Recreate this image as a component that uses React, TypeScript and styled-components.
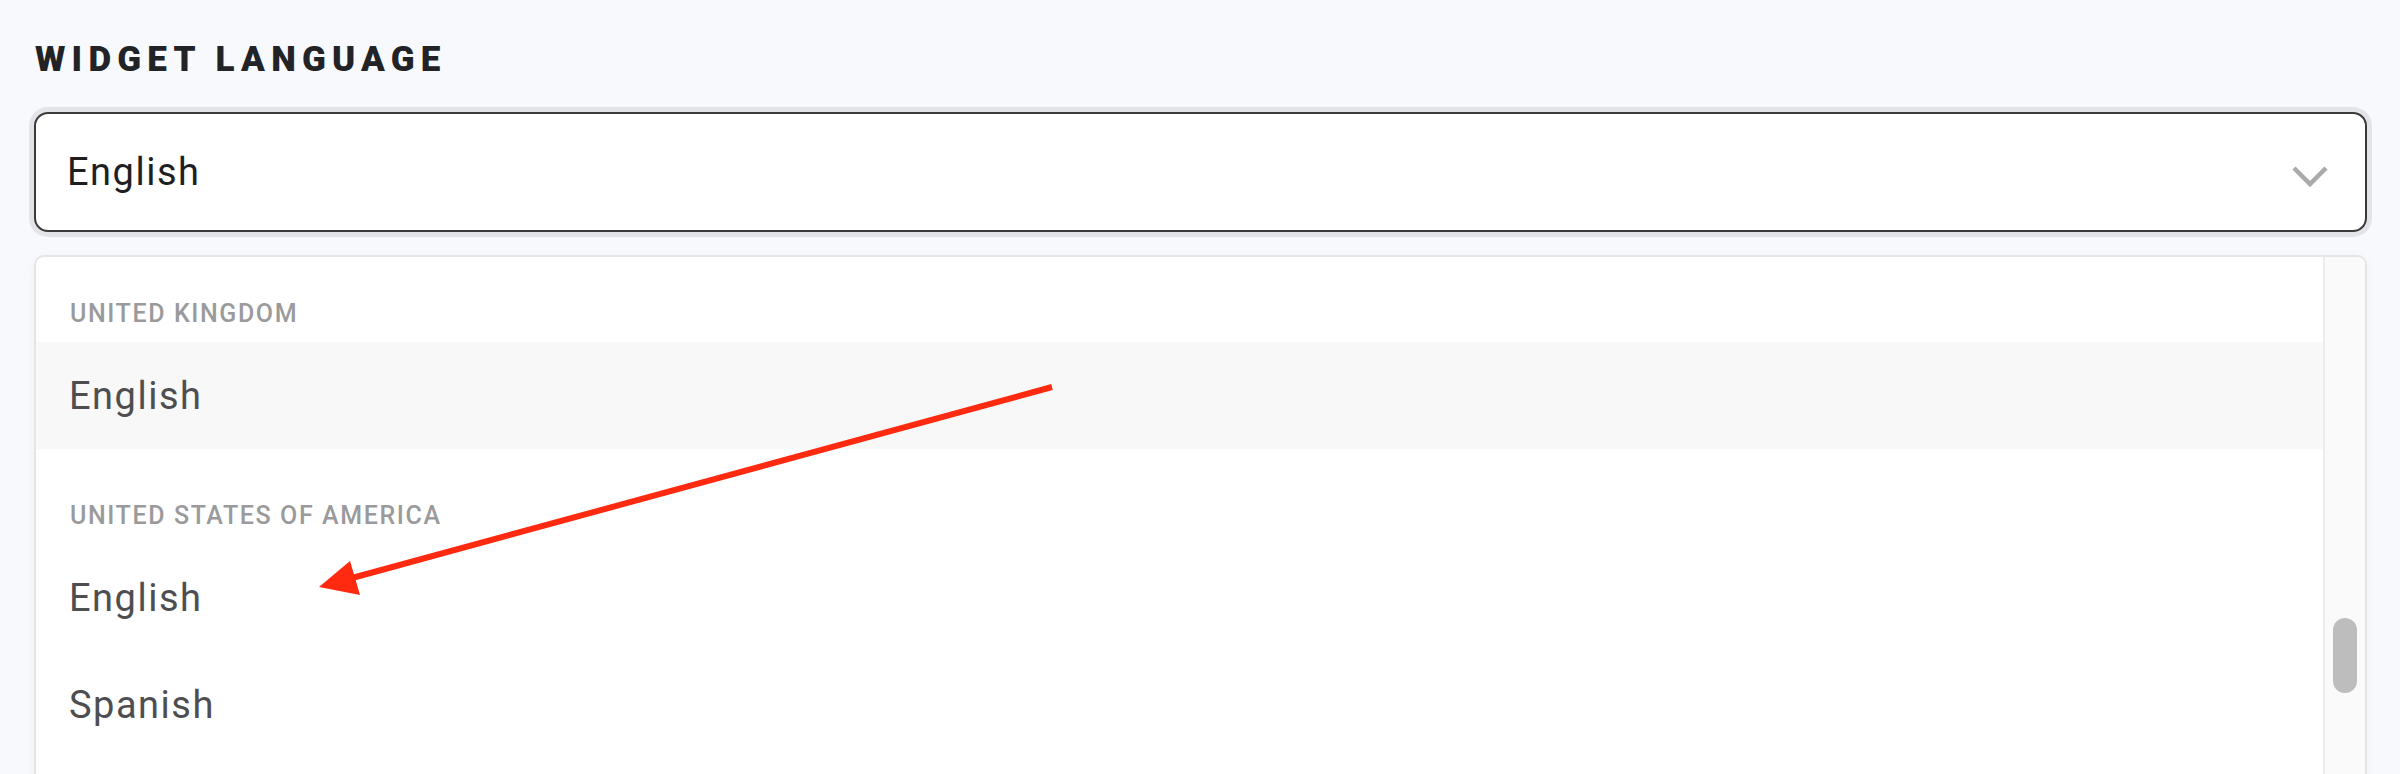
import React from "react";
import styled, { createGlobalStyle } from "styled-components";

const Global = createGlobalStyle`
  html, body { margin: 0; padding: 0; }
  body {
    background: #f8f9fc;
    font-family: Roboto, "Liberation Sans", Arial, sans-serif;
    overflow: hidden;
    width: 2400px;
    height: 774px;
  }
`;

const Page = styled.div`
  position: relative;
  width: 2400px;
  height: 774px;
  padding: 40px 33px 0 34px;
  box-sizing: border-box;
  display: flex;
  flex-direction: column;
  overflow: hidden;
`;

const Label = styled.div`
  flex-shrink: 0;
  font-weight: 900;
  font-size: 35px;
  line-height: 40px;
  letter-spacing: 6.2px;
  color: #222326;
  padding-left: 1px;
  text-transform: uppercase;
`;

const Select = styled.div`
  flex-shrink: 0;
  margin-top: 32px;
  height: 120px;
  box-sizing: border-box;
  border: 2px solid #3a3a3c;
  border-radius: 14px;
  background: #fff;
  box-shadow: 0 0 0 5px #e3e4e8;
  display: flex;
  align-items: center;
  justify-content: space-between;
  padding: 0 36px 0 31px;
`;

const SelectValue = styled.span`
  font-size: 38px;
  line-height: 44px;
  letter-spacing: 1.5px;
  color: #1f1f21;
`;

const Chevron = styled.svg`
  width: 38px;
  height: 24px;
  margin-top: 9px;
`;

const List = styled.div`
  flex-shrink: 0;
  margin-top: 23px;
  height: 600px;
  box-sizing: border-box;
  border: 2px solid #e5e5e7;
  border-bottom: none;
  border-radius: 10px 10px 0 0;
  background: #fff;
  box-shadow: 0 2px 10px rgba(0, 0, 0, 0.04);
  display: flex;
  overflow: hidden;
`;

const Options = styled.div`
  flex: 1;
  overflow: hidden;
`;

const Scrolled = styled.div`
  margin-top: -10px;
`;

const GroupHeader = styled.div`
  height: 95px;
  box-sizing: border-box;
  padding: 52px 0 0 34px;
  font-size: 25px;
  line-height: 30px;
  font-weight: 500;
  color: #9a9a9c;
  text-transform: uppercase;
  letter-spacing: 1.6px;
`;

const Option = styled.div<{ $hover?: boolean }>`
  height: 107px;
  display: flex;
  align-items: center;
  padding-left: 33px;
  font-size: 38px;
  line-height: 44px;
  letter-spacing: 1.5px;
  color: #4e4e50;
  background: ${(p) => (p.$hover ? "#f8f8f8" : "#fff")};
`;

const Track = styled.div`
  width: 42px;
  flex-shrink: 0;
  background: #fafafa;
  border-left: 2px solid #ececec;
  box-sizing: border-box;
  padding: 361px 0 0 8px;
`;

const Thumb = styled.div`
  width: 24px;
  height: 75px;
  border-radius: 12px;
  background: #bdbdbd;
`;

const Annotation = styled.svg`
  position: absolute;
  left: 0;
  top: 0;
  pointer-events: none;
`;

export default function App() {
  return (
    <>
      <Global />
      <Page>
        <Label>Widget Language</Label>
        <Select>
          <SelectValue>English</SelectValue>
          <Chevron viewBox="0 0 38 24">
            <path d="M3 3 L19 19 L35 3" fill="none" stroke="#aaaaaa" strokeWidth="4.5" />
          </Chevron>
        </Select>
        <List>
          <Options>
            <Scrolled>
              <GroupHeader>United Kingdom</GroupHeader>
              <Option $hover>English</Option>
              <GroupHeader>United States of America</GroupHeader>
              <Option>English</Option>
              <Option>Spanish</Option>
            </Scrolled>
          </Options>
          <Track>
            <Thumb />
          </Track>
        </List>
        <Annotation width="2400" height="774" viewBox="0 0 2400 774">
          <line x1="1052" y1="387" x2="352" y2="578" stroke="#ff2a10" strokeWidth="6" strokeLinecap="butt" />
          <polygon points="319,587 350,561 360,595" fill="#ff2a10" />
        </Annotation>
      </Page>
    </>
  );
}
